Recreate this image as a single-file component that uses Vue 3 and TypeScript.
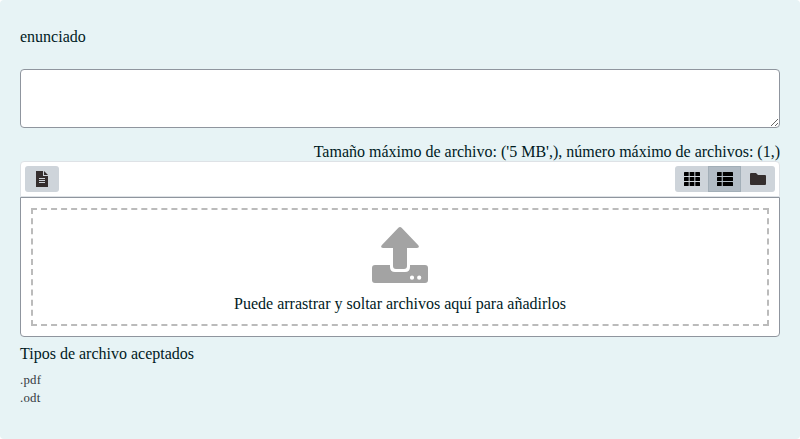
<script setup lang="ts">
import { ref } from 'vue'

type View = 'icons' | 'details' | 'tree'

const answer = ref('')
const view = ref<View>('details')
const acceptedTypes: string[] = ['.pdf', '.odt']
const gridColumns = [0, 5.65, 11.3]
const gridRows = [0, 5, 10]
</script>

<template>
  <main class="question">
    <p class="statement">enunciado</p>
    <textarea v-model="answer" class="answer" aria-label="enunciado"></textarea>
    <p class="restrictions">Tamaño máximo de archivo: ('5 MB',), número máximo de archivos: (1,)</p>

    <section class="manager">
      <div class="toolbar">
        <button type="button" class="btn add">
          <svg width="12" height="16" viewBox="0 0 12 16">
            <path fill="#352e2e" fill-rule="evenodd" d="M0 0h7v5h5v11H0zM3 7v1h6V7zM3 9v1h6V9zM3 11v1h6v-1z" />
            <path fill="#352e2e" d="M8 0l4 4H8z" />
          </svg>
        </button>
        <div class="views">
          <button type="button" class="btn" :class="{ active: view === 'icons' }" @click="view = 'icons'">
            <svg width="16" height="14" viewBox="0 0 16 14">
              <template v-for="y in gridRows" :key="y">
                <rect v-for="x in gridColumns" :key="x" :x="x" :y="y" width="4.7" height="4" rx=".5" />
              </template>
            </svg>
          </button>
          <button type="button" class="btn" :class="{ active: view === 'details' }" @click="view = 'details'">
            <svg width="16" height="14" viewBox="0 0 16 14">
              <template v-for="y in gridRows" :key="y">
                <rect x="0" :y="y" width="4.7" height="4" rx=".5" />
                <rect x="5.8" :y="y" width="10.2" height="4" rx=".5" />
              </template>
            </svg>
          </button>
          <button type="button" class="btn" :class="{ active: view === 'tree' }" @click="view = 'tree'">
            <svg width="16" height="12" viewBox="0 0 16 12">
              <path fill="#352e2e" d="M1 0h5L8 2h7Q16 2 16 3v8Q16 12 15 12H1Q0 12 0 11V1Q0 0 1 0z" />
            </svg>
          </button>
        </div>
      </div>
      <div class="container">
        <div class="dropzone">
          <svg class="arrow" width="56" height="56" viewBox="0 0 56 56">
            <g fill="#a3a3a3">
              <path d="M26.4.8Q28-.8 29.6.8L46.3 18.2Q48 21 45 21H35V39Q35 42 32 42H24Q21 42 21 39V21H11Q8 21 9.7 18.2z" />
              <path fill-rule="evenodd" d="M3 38H18V40Q18 45 23 45H33Q38 45 38 40V38H53Q56 38 56 41V53Q56 56 53 56H3Q0 56 0 53V41Q0 38 3 38zM40 48.6a2.1 2.1 0 1 0 0 4.2a2.1 2.1 0 1 0 0-4.2zM47.2 48.6a2.1 2.1 0 1 0 0 4.2a2.1 2.1 0 1 0 0-4.2z" />
            </g>
          </svg>
          <span>Puede arrastrar y soltar archivos aquí para añadirlos</span>
        </div>
      </div>
    </section>

    <p class="types-title">Tipos de archivo aceptados</p>
    <ul class="types">
      <li v-for="type in acceptedTypes" :key="type">{{ type }}</li>
    </ul>
  </main>
</template>

<style>
body {
  background: #fff;
}
</style>

<style scoped>
.question {
  box-sizing: border-box;
  height: 439px;
  padding: 28px 20px 0;
  border-radius: 4px;
  background: #e7f3f5;
  color: #001a1e;
  font: 16px/18px "Liberation Serif", "Times New Roman", serif;
}
p {
  margin: 0;
}
.answer {
  display: block;
  box-sizing: border-box;
  width: 100%;
  height: 59px;
  margin: 23px 0 15px;
  border: 1px solid #8f959e;
  border-radius: 4px;
  background: #fff;
  resize: vertical;
  outline: none;
}
.restrictions {
  text-align: right;
}
.toolbar {
  box-sizing: border-box;
  display: flex;
  justify-content: space-between;
  height: 36px;
  padding: 4px;
  border: 1px solid #dee2e6;
  border-radius: 4px 4px 0 0;
  background: #fff;
}
.views {
  display: flex;
}
.btn {
  display: flex;
  align-items: center;
  justify-content: center;
  width: 33px;
  height: 26px;
  padding: 0;
  border: 0;
  background: #ced4da;
}
.btn.add {
  width: 34px;
  border-radius: 3px;
}
.views .btn:first-child {
  border-radius: 3px 0 0 3px;
}
.views .btn:last-child {
  width: 34px;
  border-radius: 0 3px 3px 0;
}
.btn.active {
  border: 1px solid #a3afb8;
  background: #b1bbc4;
}
.container {
  box-sizing: border-box;
  height: 140px;
  padding: 10px;
  border: 1px solid #8f959e;
  border-radius: 0 0 4px 4px;
  background: #fff;
}
.dropzone {
  box-sizing: border-box;
  display: flex;
  flex-direction: column;
  align-items: center;
  gap: 12px;
  height: 118px;
  padding-top: 17px;
  border: 2px dashed #bbb;
}
.arrow {
  flex: none;
}
.types-title {
  margin-top: 8px;
}
.types {
  margin: 8px 0 0;
  padding: 0;
  color: #343a40;
  font-size: 12.8px;
  line-height: 18px;
  letter-spacing: 0.25px;
  list-style: none;
}
</style>
